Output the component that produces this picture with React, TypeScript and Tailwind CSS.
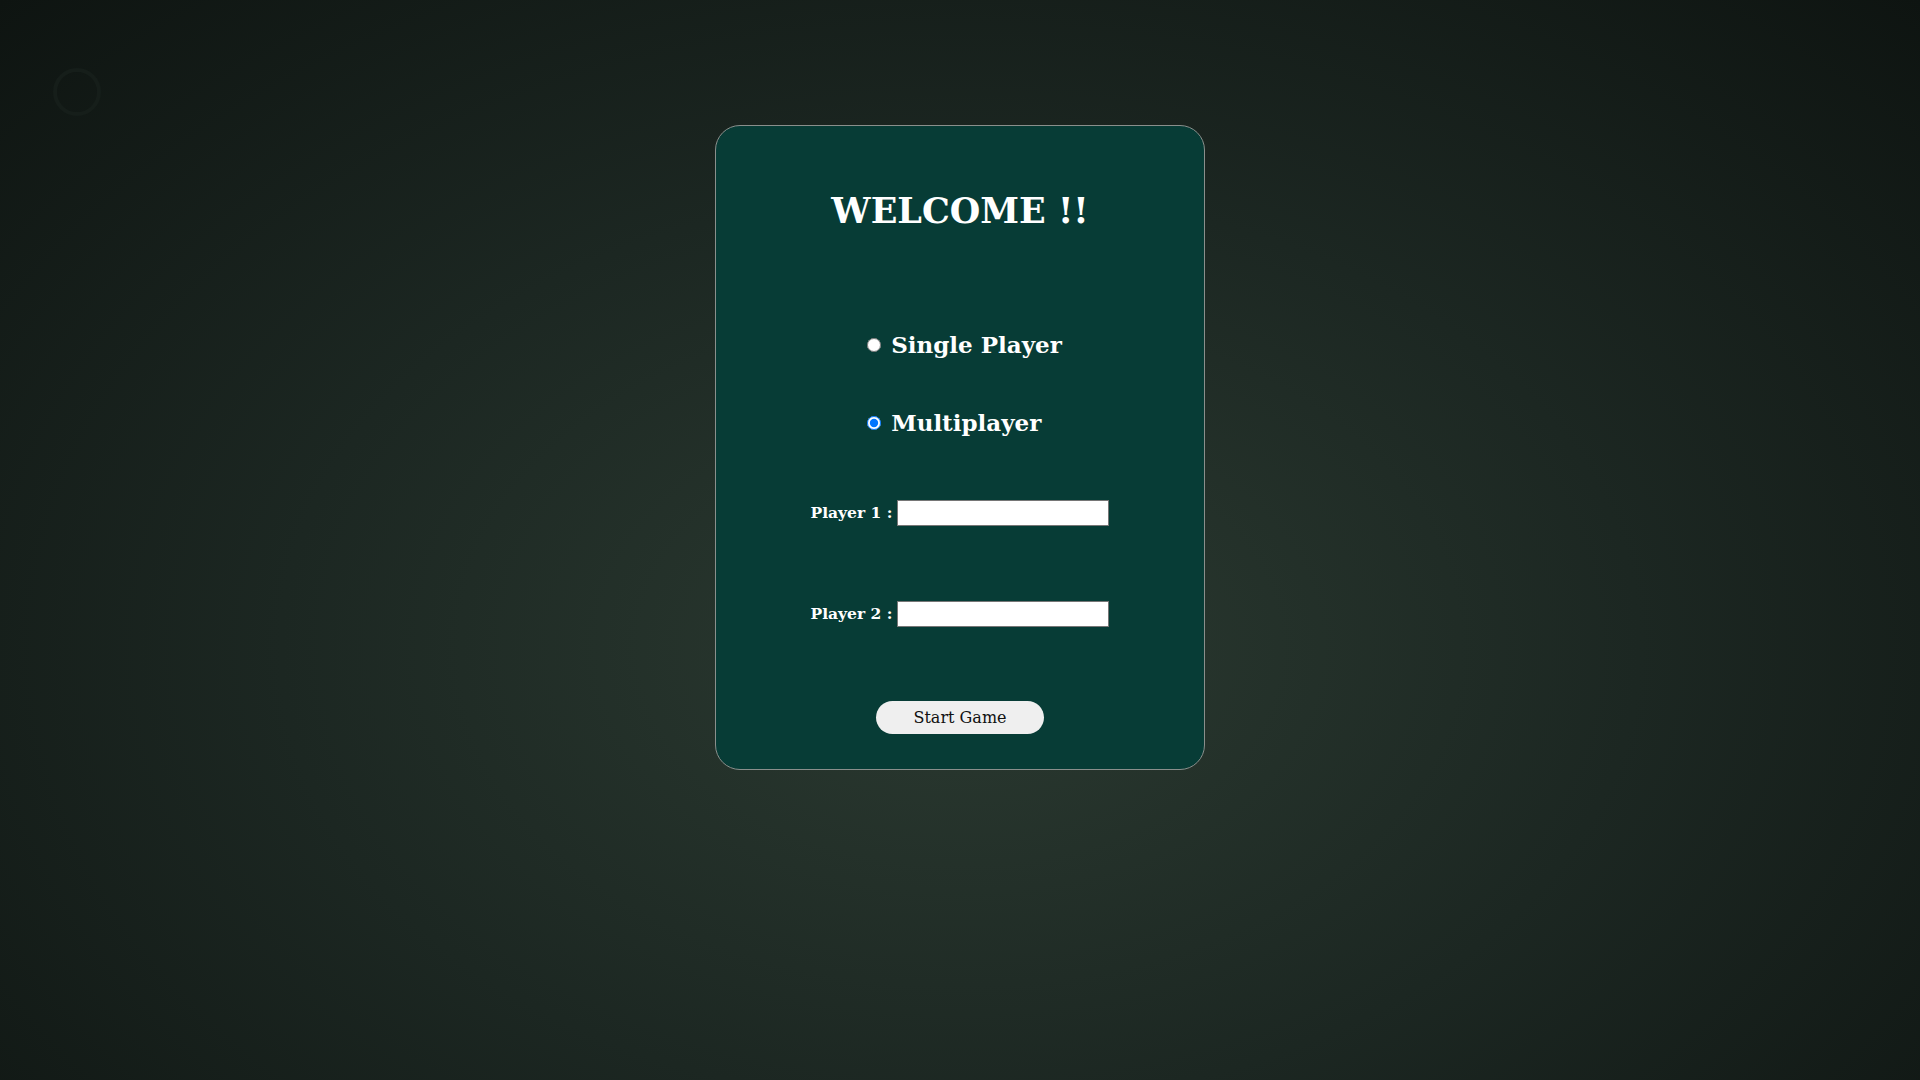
import { useState } from "react";

const serif = "font-['DejaVu_Serif','Liberation_Serif',serif]";

export default function App() {
  const [mode, setMode] = useState<"single" | "multi">("multi");

  return (
    <div className="relative min-h-screen w-full bg-[radial-gradient(ellipse_farthest-corner_at_50%_60%,#2b3a31_0%,#1c2722_50%,#0e1411_100%)]">
      {/* faint icon top left */}
      <svg
        className="absolute left-[52px] top-[67px] h-[50px] w-[50px]"
        viewBox="0 0 50 50"
        fill="none"
      >
        <circle cx="25" cy="25" r="22" stroke="#161e1a" strokeWidth="4" />
      </svg>

      <div className="flex justify-center pt-[125px]">
        <div
          className={`${serif} flex w-[490px] flex-col items-center rounded-[25px] border border-[#8a8f8c] bg-[#073c36] pb-[35px] pt-[64px] text-white`}
        >
          <h1 className="text-[35px] font-bold leading-[42px]">WELCOME !!</h1>

          <div className="ml-[6px] mt-[98px] flex flex-col items-start">
            <label className="flex h-[30px] items-center text-[23px] font-bold leading-[30px]">
              <input
                type="radio"
                name="mode"
                className="m-0 ml-[3px] mr-[10px] h-[14px] w-[14px]"
                checked={mode === "single"}
                onChange={() => setMode("single")}
              />
              Single Player
            </label>
            <label className="mt-[48px] flex h-[30px] items-center text-[23px] font-bold leading-[30px]">
              <input
                type="radio"
                name="mode"
                className="m-0 ml-[3px] mr-[10px] h-[14px] w-[14px]"
                checked={mode === "multi"}
                onChange={() => setMode("multi")}
              />
              Multiplayer
            </label>
          </div>

          <PlayerRow label="Player 1 :" className="mt-[62px]" />
          <PlayerRow label="Player 2 :" className="mt-[75px]" />

          <button className="mt-[74px] h-[33px] w-[168px] rounded-full bg-[#efefef] text-[16px] text-[#111]">
            Start Game
          </button>
        </div>
      </div>
    </div>
  );
}

function PlayerRow({ label, className }: { label: string; className: string }) {
  return (
    <div className={`flex items-center gap-[5px] ${className}`}>
      <span className="text-[15.5px] font-bold">{label}</span>
      <input
        type="text"
        className="h-[26px] w-[212px] border border-[#767676] bg-white px-1 text-black outline-none"
      />
    </div>
  );
}
